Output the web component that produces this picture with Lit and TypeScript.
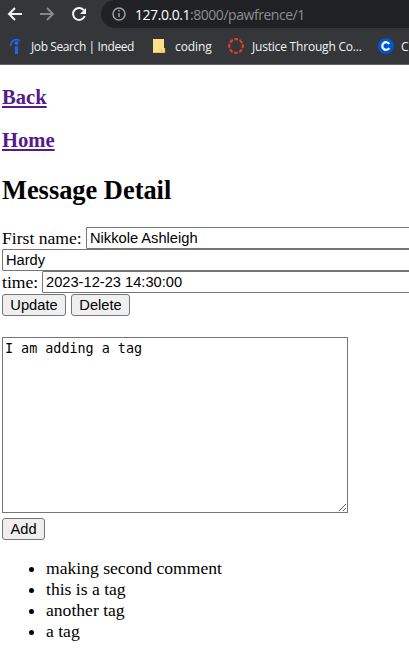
import { LitElement, html, css } from "lit";
import { customElement } from "lit/decorators.js";

@customElement("browser-bar")
class BrowserBar extends LitElement {
  static styles = css`
    :host { display: block; height: 65px; box-sizing: border-box; background: #35363a; border-bottom: 1px solid #606166; overflow: hidden; font-family: "Open Sans", "Noto Sans", sans-serif; color: #f1f3f4; }
    svg { display: block; flex: none; }
    .nav { display: flex; height: 28px; }
    .controls { flex: none; }
    .address { flex: 1; display: flex; align-items: center; background: #202124; border-radius: 14px 0 0 14px; padding-left: 10px; margin-left: 1px; white-space: pre; }
    .url { margin-left: 8px; font-size: 14px; letter-spacing: -0.46px; color: #8b8e92; }
    .host { color: #fff; letter-spacing: -0.45px; }
    .marks { display: flex; height: 36px; align-items: center; padding-left: 7px; font-size: 12px; white-space: nowrap; }
    .mark { display: flex; align-items: center; flex: none; }
    .indeed { width: 143px; letter-spacing: -0.4px; }
    .coding { width: 77px; letter-spacing: -0.1px; }
    .justice { width: 150px; letter-spacing: -0.2px; }
    .label { margin-left: 8px; }
    .justice .label { margin-left: 7px; }
    .coursera .label { margin-left: 6px; }
  `;
  render() {
    return html`
      <div class="nav">
        <svg class="controls" width="100" height="28" fill="none" stroke-width="2">
          <path d="M22 14H10M15 8l-6 6 6 6" stroke="#f1f3f4" />
          <path d="M40 14h12M47 8l6 6-6 6" stroke="#85878b" />
          <path d="M84 10.5A6 6 0 1 0 84.7 16" stroke="#f1f3f4" />
          <path d="M86 8v6h-6z" fill="#f1f3f4" />
        </svg>
        <div class="address">
          <svg width="16" height="28" fill="none" stroke="#9aa0a6" stroke-width="1.5">
            <circle cx="8" cy="14" r="6" /><path d="M8 13v4M8 10v1.5" />
          </svg>
          <span class="url"><span class="host">127.0.0.1</span>:8000/pawfrence/1</span>
        </div>
      </div>
      <div class="marks">
        <div class="mark indeed">
          <svg width="16" height="18" fill="none" stroke="#2164f3">
            <path d="M3.5 9C4 4 8 .8 13 3.5" stroke-width="1.6" />
            <circle cx="9.5" cy="6" r="2.1" fill="#2164f3" stroke="none" />
            <path d="M9.5 9.3V17" stroke-width="3" />
          </svg>
          <span class="label">Job Search | Indeed</span>
        </div>
        <div class="mark coding">
          <svg width="17" height="16">
            <path d="M3 1h11v9h1v5H3z" fill="#ffe08a" />
            <path d="M11.7 11v3.5h3V10.5" fill="none" stroke="#e5b936" />
            <path d="M3 14.5h9" stroke="#f0c64d" />
          </svg>
          <span class="label">coding</span>
        </div>
        <div class="mark justice">
          <svg width="18" height="18" viewBox="0 0 18 18" fill="none" stroke="#e23b32">
            <circle cx="9" cy="9" r="6.8" stroke-width="2.2" stroke-dasharray="3.9 1.44" stroke-dashoffset="1.95" />
          </svg>
          <span class="label">Justice Through Co...</span>
        </div>
        <div class="mark coursera">
          <svg width="18" height="18" fill="none">
            <circle cx="9" cy="9" r="8" fill="#0056d2" />
            <path d="M12.3 7A3.8 3.8 0 1 0 12.3 11" stroke="#fff" stroke-width="2.2" />
          </svg>
          <span class="label">C</span>
        </div>
      </div>`;
  }
}

@customElement("app-root")
class AppRoot extends LitElement {
  static styles = css`
    :host { display: block; width: 409px; height: 669px; overflow: hidden; background: #fff; color: #000; font: 17.6px/21px "Liberation Serif", serif; }
    .page { padding-left: 2px; }
    h3, h1 { margin: 0; font-weight: bold; }
    h3 { font-size: 20.6px; line-height: 24px; }
    .back { padding-top: 20px; }
    .home { padding-top: 19px; }
    a { color: #551a8b; text-decoration: underline; text-decoration-thickness: 2px; text-underline-offset: 2px; }
    h1 { font-size: 26.4px; line-height: 30px; margin: 23px 0 22px; }
    .row { display: flex; height: 22px; width: 800px; line-height: 22px; }
    .row span { flex: none; }
    .first { width: 84px; }
    .time { width: 40px; }
    input, textarea, button { box-sizing: border-box; margin: 0; border: 1px solid #767676; color: #000; outline: none; }
    input { flex: 1; height: 22px; padding: 1px 3px; border-radius: 1px; background: #fff; font: 14.67px "Liberation Sans", Arial, sans-serif; }
    button { display: block; height: 22px; padding: 0; border-radius: 3px; background: #efefef; font: 14.67px "Liberation Sans", Arial, sans-serif; }
    .buttons { display: flex; gap: 5px; margin-top: 1px; }
    .update { width: 64px; }
    .delete { width: 59px; }
    .add { width: 43px; margin-top: 5px; }
    textarea { display: block; width: 346px; height: 176px; margin-top: 21px; padding: 2px; resize: both; font: 13.4px/17px "DejaVu Sans Mono", monospace; }
    ul { margin: 18px 0 0; padding: 0 0 0 44px; }
  `;
  render() {
    return html`
      <browser-bar></browser-bar>
      <main class="page">
        <h3 class="back"><a href="#">Back</a></h3>
        <h3 class="home"><a href="#">Home</a></h3>
        <h1>Message Detail</h1>
        <div class="row"><span class="first">First name:</span><input .value=${"Nikkole Ashleigh"} /></div>
        <div class="row"><input .value=${"Hardy"} /></div>
        <div class="row"><span class="time">time:</span><input .value=${"2023-12-23 14:30:00"} /></div>
        <div class="buttons"><button class="update">Update</button><button class="delete">Delete</button></div>
        <textarea spellcheck="false" .value=${"I am adding a tag"}></textarea>
        <button class="add">Add</button>
        <ul>
          ${["making second comment", "this is a tag", "another tag", "a tag"].map((t) => html`<li>${t}</li>`)}
        </ul>
      </main>`;
  }
}
